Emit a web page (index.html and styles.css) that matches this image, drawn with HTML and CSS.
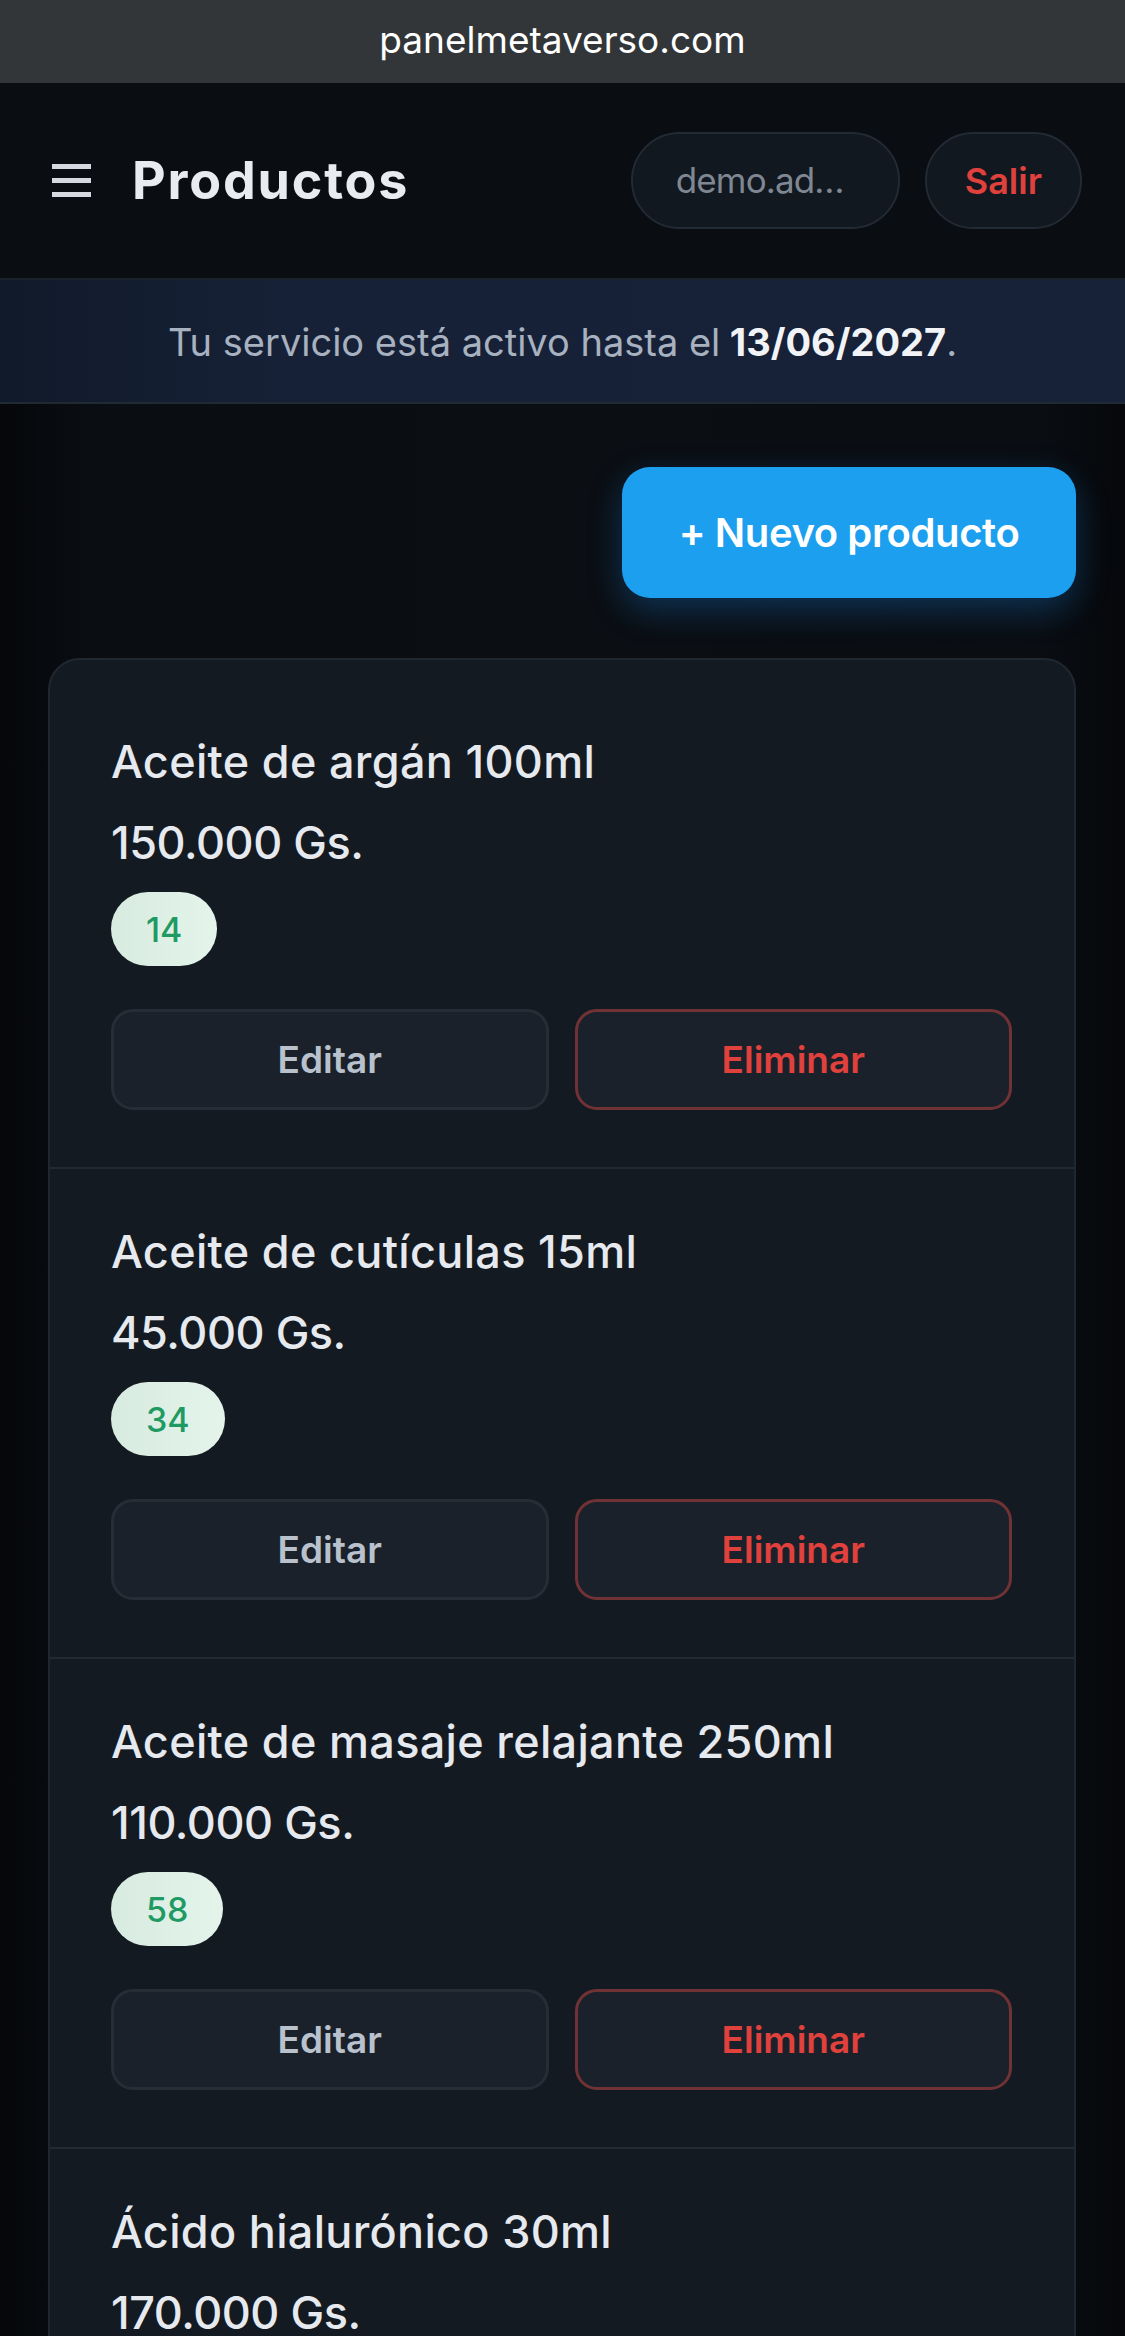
FILE: index.html
```html
<!DOCTYPE html>
<html lang="es">
<head>
    <meta charset="UTF-8">
    <meta name="viewport" content="width=device-width, initial-scale=1.0">
    <title>Productos</title>
    <link rel="stylesheet" href="styles.css">
</head>
<body>
    <div class="urlbar">panelmetaverso.com</div>

    <header class="topbar">
        <div class="topbar-left">
            <button class="menu-btn" aria-label="Menú">
                <span></span><span></span><span></span>
            </button>
            <h1>Productos</h1>
        </div>
        <div class="topbar-right">
            <div class="user-pill">demo.admin@panelmetaverso.com</div>
            <button class="logout-pill">Salir</button>
        </div>
    </header>

    <div class="notice">
        Tu servicio está activo hasta el <strong>13/06/2027</strong>.
    </div>

    <main class="content">
        <div class="toolbar">
            <button class="btn-new">+ Nuevo producto</button>
        </div>

        <div class="product-list">
            <div class="product">
                <div class="product-name">Aceite de argán 100ml</div>
                <div class="product-price">150.000 Gs.</div>
                <span class="stock">14</span>
                <div class="product-actions">
                    <button class="btn-edit">Editar</button>
                    <button class="btn-delete">Eliminar</button>
                </div>
            </div>
            <div class="product">
                <div class="product-name">Aceite de cutículas 15ml</div>
                <div class="product-price">45.000 Gs.</div>
                <span class="stock">34</span>
                <div class="product-actions">
                    <button class="btn-edit">Editar</button>
                    <button class="btn-delete">Eliminar</button>
                </div>
            </div>
            <div class="product">
                <div class="product-name">Aceite de masaje relajante 250ml</div>
                <div class="product-price">110.000 Gs.</div>
                <span class="stock">58</span>
                <div class="product-actions">
                    <button class="btn-edit">Editar</button>
                    <button class="btn-delete">Eliminar</button>
                </div>
            </div>
            <div class="product">
                <div class="product-name">Ácido hialurónico 30ml</div>
                <div class="product-price">170.000 Gs.</div>
                <span class="stock">21</span>
                <div class="product-actions">
                    <button class="btn-edit">Editar</button>
                    <button class="btn-delete">Eliminar</button>
                </div>
            </div>
        </div>
    </main>
</body>
</html>
```

FILE: styles.css
```css
body {
    margin: 0;
    padding: 0;
    font-family: Inter, "Noto Sans", sans-serif;
    color: #e6e9ee;
    background-color: #0a0d12;
    background-image: linear-gradient(90deg, #05070a 0%, #0a0d12 8%, #0b0e13 50%, #0a0d12 92%, #06080b 100%);
    min-height: 100vh;
}
button {
    font-family: inherit;
    cursor: pointer;
}
.urlbar {
    height: 83px;
    background: #333639;
    color: #fff;
    font-size: 37px;
    display: flex;
    justify-content: center;
    align-items: center;
    box-sizing: border-box;
    padding-bottom: 4px;
}
.topbar {
    height: 197px;
    box-sizing: border-box;
    display: flex;
    justify-content: space-between;
    align-items: center;
    padding: 0 43px 0 52px;
    background: #0a0d12;
    border-bottom: 2px solid #1b222b;
}
.topbar-left {
    display: flex;
    align-items: center;
    gap: 41px;
}
.menu-btn {
    width: 39px;
    height: 33px;
    padding: 0;
    border: none;
    background: none;
    display: flex;
    flex-direction: column;
    justify-content: space-between;
}
.menu-btn span {
    display: block;
    height: 5px;
    background: #d6dae0;
}
.topbar h1 {
    margin: 0;
    font-size: 52px;
    font-weight: 700;
    letter-spacing: 0.035em;
    color: #e8ebef;
}
.topbar-right {
    display: flex;
    gap: 25px;
}
.user-pill {
    width: 269px;
    height: 97px;
    box-sizing: border-box;
    padding: 0 38px 0 43px;
    line-height: 93px;
    border: 2px solid #222a34;
    border-radius: 49px;
    background: #121820;
    color: #7f8792;
    font-size: 35px;
    white-space: nowrap;
    overflow: hidden;
    text-overflow: ellipsis;
    letter-spacing: -0.025em;
}
.logout-pill {
    height: 97px;
    padding: 0 38px;
    border: 2px solid #222a34;
    border-radius: 49px;
    background: #121820;
    color: #e0413c;
    font-size: 36px;
    font-weight: 600;
}
.notice {
    height: 124px;
    box-sizing: border-box;
    display: flex;
    justify-content: center;
    align-items: center;
    background: linear-gradient(90deg, #111a2a 0%, #162137 25%, #172239 100%);
    border-bottom: 2px solid #1f2a33;
    color: #a7b1bf;
    font-size: 38px;
    padding-top: 2px;
}
.notice strong {
    color: #f1f3f6;
    font-weight: 700;
    margin-left: 0.25em;
}
.content {
    padding: 63px 49px 0 48px;
}
.toolbar {
    display: flex;
    justify-content: flex-end;
    margin-bottom: 60px;
}
.btn-new {
    width: 454px;
    height: 131px;
    border: none;
    border-radius: 28px;
    background: #1d9ff0;
    color: #fff;
    font-size: 40px;
    font-weight: 600;
    letter-spacing: -0.01em;
    box-shadow: 0 12px 34px rgba(22, 130, 220, 0.32);
}
.product-list {
    background: #141a22;
    border: 2px solid #1f2731;
    border-radius: 32px;
    padding-top: 19px;
    overflow: hidden;
}
.product {
    padding: 56px 62px 57px 61px;
    border-top: 2px solid #222a34;
}
.product:first-child {
    border-top: none;
}
.product-name,
.product-price {
    font-size: 45px;
    font-weight: 500;
    line-height: 54px;
    color: #e6e9ee;
}
.product-name {
    margin-bottom: 27px;
    letter-spacing: 0.007em;
}
.product-price {
    margin-bottom: 22px;
    letter-spacing: -0.01em;
}
.stock {
    display: inline-flex;
    align-items: center;
    height: 74px;
    padding: 0 35px;
    border-radius: 37px;
    background: linear-gradient(90deg, #d8ebe1 0%, #e4f4ea 100%);
    color: #1f9a63;
    font-size: 34px;
    font-weight: 500;
}
.product-actions {
    display: grid;
    grid-template-columns: 1fr 1fr;
    gap: 26px;
    margin-top: 43px;
}
.product-actions button {
    height: 101px;
    border-radius: 22px;
    background: #1b212b;
    font-size: 37px;
    font-weight: 600;
}
.btn-edit {
    border: 3px solid #252d37;
    color: #b9c1cc;
}
.btn-delete {
    border: 3px solid #703234;
    color: #e0413c;
}
```
